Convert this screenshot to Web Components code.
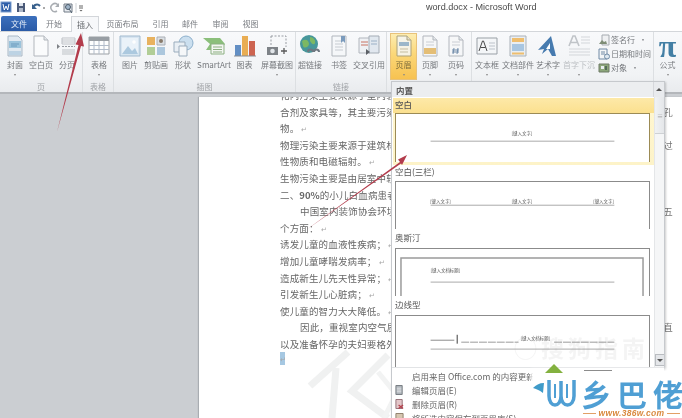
<!DOCTYPE html>
<html lang="zh">
<head>
<meta charset="utf-8">
<title>word.docx - Microsoft Word</title>
<style>
html,body{margin:0;padding:0;background:#fff;overflow:hidden}
body{font-family:"Noto Sans CJK SC","Liberation Sans",sans-serif}
</style>
</head>
<body>
<word-app>
  <word-titlebar slot="title"></word-titlebar>
  <word-tabs slot="tabs"></word-tabs>
  <word-ribbon slot="ribbon">
    <rb-group label="页" w="83" pl="2">
      <rb-btn label="封面" w="26" arrow><svg viewBox="0 0 22 22"><path d="M4 1h10l4 4v16H4z" fill="#dfe8f0" stroke="#9fb0c0"/><path d="M5 6h12v7H5z" fill="#8fbcd8"/><path d="M5 16h12v4H5z" fill="#b6cfe2"/><path d="M7 9h8M7 11h6" stroke="#5b8fb5"/></svg></rb-btn>
      <rb-btn label="空白页" w="26"><svg viewBox="0 0 22 22"><path d="M4 1h10l4 4v16H4z" fill="#fbfcfd" stroke="#a9aeb5"/><path d="M14 1v4h4" fill="#e3e6ea" stroke="#a9aeb5"/></svg></rb-btn>
      <rb-btn label="分页" w="26"><svg viewBox="0 0 22 22"><path d="M6 3h13v6H6z" fill="#fff" stroke="#b5b9bf"/><path d="M6 5h13M6 7h13M6 15h13M6 17h13M6 19h13" stroke="#b5b9bf"/><path d="M6 11.500h13" stroke="#8a8f96" stroke-dasharray="2 1"/><path d="M1 9l3 2.500-3 2.500z" fill="#6f7378"/></svg></rb-btn>
    </rb-group>
    <rb-group label="表格" w="31" pl="1">
      <rb-btn label="表格" w="30" arrow><svg viewBox="0 0 22 22"><path d="M1 2h20v17H1z" fill="#fff" stroke="#8f9499"/><path d="M1 2h20v4H1z" fill="#8c9299"/><path d="M1 10.500h20M1 14.500h20M6 6v13M11 6v13M16 6v13" stroke="#a8b4c4"/></svg></rb-btn>
    </rb-group>
    <rb-group label="插图" w="182" pl="1">
      <rb-btn label="图片" w="30"><svg viewBox="0 0 22 22"><path d="M1 1h20v20H1z" fill="#d3e3f0" stroke="#97b2c9"/><path d="M3 3h16v16H3z" fill="#e9f2f9"/><path d="M3 19l6-8 4 5 3-3 3 6z" fill="#a3c3dc"/><circle cx="15" cy="7" r="1.800" fill="#fff"/></svg></rb-btn>
      <rb-btn label="剪贴画" w="22"><svg viewBox="0 0 22 22"><path d="M2 2h8v8H2z" fill="#e7a94a"/><path d="M12 2h8v8h-8z" fill="#d8dde2" stroke="#a0a6ad"/><path d="M2 12h8v8H2z" fill="#a9c98a"/><path d="M12 12h8v8h-8z" fill="#a3c1da"/><circle cx="16" cy="6" r="2" fill="#7a6a58"/></svg></rb-btn>
      <rb-btn label="形状" w="32"><svg viewBox="0 0 22 22"><circle cx="14" cy="8" r="7" fill="#c6dcee" stroke="#7ea5c5"/><path d="M2 7h11v10H2z" fill="#e8eef4" stroke="#8ea3b5"/><path d="M7 11h8v10H7z" fill="#f6f8fa" stroke="#8ea3b5"/></svg></rb-btn>
      <rb-btn label="SmartArt" w="30"><svg viewBox="0 0 22 22"><path d="M0 3h17l5 6-5 6-3 0H3l4-6z" fill="#7db86a"/><path d="M8 9h13v10H8z" fill="#f3f6f2" stroke="#7fa772"/><path d="M10 12h9M10 14.500h9M10 17h9" stroke="#7fa772"/></svg></rb-btn>
      <rb-btn label="图表" w="31"><svg viewBox="0 0 22 22"><path d="M1 10h6v11H1z" fill="#4f81bd"/><path d="M8 1h6v20H8z" fill="#e8a33d"/><path d="M15 6h6v15h-6z" fill="#c8503a"/><path d="M0 21h22" stroke="#7a7f85"/></svg></rb-btn>
      <rb-btn label="屏幕截图" w="34" arrow><svg viewBox="0 0 22 22"><path d="M5 1h15v11" fill="none" stroke="#8a8f96" stroke-dasharray="2 1.500"/><path d="M5 1v9" stroke="#8a8f96" stroke-dasharray="2 1.500"/><path d="M1 12h11v8H1z" fill="#6d7378"/><circle cx="6.500" cy="16" r="2.300" fill="#dfe3e7"/><path d="M15 16h6M18 13v6" stroke="#444" stroke-width="1.300"/></svg></rb-btn>
    </rb-group>
    <rb-group label="链接" w="91" pl="1">
      <rb-btn label="超链接" w="26"><svg viewBox="0 0 22 22"><circle cx="10" cy="9" r="9" fill="#2f8a8e"/><path d="M3 6c4-3 7 0 7 3s-5 5-6 2zM11 2c3 0 6 3 5 6s-4 0-5-2z" fill="#6cb04f"/><path d="M9 17a2.500 2.500 0 015 0M15 17a2.500 2.500 0 015 0" fill="none" stroke="#5c6670" stroke-width="2"/></svg></rb-btn>
      <rb-btn label="书签" w="32"><svg viewBox="0 0 22 22"><path d="M4 1h14v20H4z" fill="#f6f8fa" stroke="#a8aeb5"/><path d="M7 6h8M7 9h8M7 12h8M7 15h8" stroke="#c0c6cc"/><path d="M13 1h4v7l-2-2-2 2z" fill="#6a8fb5"/></svg></rb-btn>
      <rb-btn label="交叉引用" w="28"><svg viewBox="0 0 22 22"><path d="M1 3h11v15H1z" fill="#eef1f4" stroke="#a8aeb5"/><path d="M3 7h7M3 10h7" stroke="#c2604f"/><path d="M11 1h10v17H11z" fill="#dfe6ee" stroke="#99a2ac"/><path d="M8 14l4 3-4 3z" fill="#474c52"/><path d="M13 6h6M13 9h6" stroke="#8ea7bf"/></svg></rb-btn>
    </rb-group>
    <rb-group label="页眉和页脚" w="85" pl="3">
      <rb-btn label="页眉" w="27" arrow active><svg viewBox="0 0 22 22"><path d="M4 1h10l4 4v16H4z" fill="#f6f6f2" stroke="#a29a78"/><path d="M14 1v4h4" fill="#e3e0d2" stroke="#a29a78"/><path d="M6 7h10v4H6z" fill="#8fb1d1"/><path d="M7 14h8M7 17h8" stroke="#bdb9a5"/></svg></rb-btn>
      <rb-btn label="页脚" w="26" arrow><svg viewBox="0 0 22 22"><path d="M4 1h10l4 4v16H4z" fill="#f6f7f8" stroke="#a9aeb5"/><path d="M14 1v4h4" fill="#e3e6ea" stroke="#a9aeb5"/><path d="M7 7h8M7 10h8" stroke="#c6cad0"/><path d="M5 13h12v6H5z" fill="#e2b765"/></svg></rb-btn>
      <rb-btn label="页码" w="26" arrow><svg viewBox="0 0 22 22"><path d="M4 1h10l4 4v16H4z" fill="#f6f7f8" stroke="#a9aeb5"/><path d="M14 1v4h4" fill="#e3e6ea" stroke="#a9aeb5"/><path d="M7 7h8M7 10h8" stroke="#c6cad0"/><path d="M9 13l-1 6M13 13l-1 6M7 15h7M7 17h7" stroke="#5e7ea0"/></svg></rb-btn>
    </rb-group>
    <rb-group label="文本" w="182" pl="1">
      <rb-btn label="文本框" w="28" arrow><svg viewBox="0 0 22 22"><path d="M1 3h20v16H1z" fill="#f4f6f8" stroke="#8d949b"/><path d="M3 16l3.500-10h1L11 16M4.500 12.500h5" fill="none" stroke="#333" stroke-width="1"/><path d="M13 8h6M13 11h6M13 14h6" stroke="#b5bcc4"/></svg></rb-btn>
      <rb-btn label="文档部件" w="34" arrow><svg viewBox="0 0 22 22"><path d="M3 1h16v20H3z" fill="#e8edf2" stroke="#a0a8b0"/><path d="M5 3h12v4H5z" fill="#eeb75c"/><path d="M5 9h12v7H5z" fill="#9ec0de"/><path d="M5 17.500h12v2H5z" fill="#eeb75c"/></svg></rb-btn>
      <rb-btn label="艺术字" w="26" arrow><svg viewBox="0 0 22 22"><path d="M14 1L1 15l6-1-2 5 6-5 4 7h4z" fill="#2f6aa5"/><path d="M13 8v6H9z" fill="#fff"/></svg></rb-btn>
      <rb-btn label="首字下沉" w="36" arrow dim><svg viewBox="0 0 22 22"><path d="M1 11L5 1h2l4 10M3 7.500h6" fill="none" stroke="#b9bdc2" stroke-width="1.600"/><path d="M13 2h9M13 5h9M13 8h9M1 14h21M1 17h21M1 20h21" stroke="#cfd2d6"/></svg></rb-btn>
      <rb-col>
        <rb-small label="签名行" arrow><svg viewBox="0 0 12 12"><path d="M4 1h7v10H4z" fill="#eef0f2" stroke="#9aa0a6"/><path d="M1 10l3-4 2 2 2-1 1 3z" fill="#6e7f64"/></svg></rb-small>
        <rb-small label="日期和时间"><svg viewBox="0 0 12 12"><path d="M1 1h8v10H1z" fill="#f3f5f7" stroke="#5f7d9b"/><path d="M3 4h4M3 6h4" stroke="#5f7d9b"/><circle cx="9" cy="8.500" r="2.500" fill="#dce7f0" stroke="#5f7d9b"/></svg></rb-small>
        <rb-small label="对象" arrow><svg viewBox="0 0 12 12"><path d="M1 2h10v8H1z" fill="#7e9c6a" stroke="#5c6b52"/><path d="M3 4h3v3H3z" fill="#e8edf0"/><path d="M7 4h2v4H7z" fill="#3f5a44"/></svg></rb-small>
      </rb-col>
    </rb-group>
    <rb-group label="" w="27" pl="0" last>
      <rb-btn label="公式" w="27" arrow><span class="pi" style="display:block;font:bold 32px/22px 'Liberation Serif',serif;color:#2b6f99;text-align:center">π</span></rb-btn>
    </rb-group>
  </word-ribbon>
  <word-workspace slot="work">
    <doc-page>
      <doc-line>化内污染主要来源于室内装</doc-line>
      <doc-line end="孔">合剂及家具等，其主要污染</doc-line>
      <doc-line>物。<i>↵</i></doc-line>
      <doc-line end="过">物理污染主要来源于建筑材</doc-line>
      <doc-line>性物质和电磁辐射。<i>↵</i></doc-line>
      <doc-line>生物污染主要是由居室中较</doc-line>
      <doc-line>二、<b>90%</b>的小儿白血病患者</doc-line>
      <doc-line indent end="五">中国室内装饰协会环境</doc-line>
      <doc-line>个方面：<i>↵</i></doc-line>
      <doc-line>诱发儿童的血液性疾病；<i>↵</i></doc-line>
      <doc-line>增加儿童哮喘发病率；<i>↵</i></doc-line>
      <doc-line>造成新生儿先天性异常；<i>↵</i></doc-line>
      <doc-line>引发新生儿心脏病；<i>↵</i></doc-line>
      <doc-line>使儿童的智力大大降低。<i>↵</i></doc-line>
      <doc-line indent end="直">因此，重视室内空气质</doc-line>
      <doc-line>以及准备怀孕的夫妇要格外</doc-line>
      <doc-line mark><i>↵</i></doc-line>
    </doc-page>
  </word-workspace>
  <page-watermark slot="over"></page-watermark>
  <header-menu slot="over">
    <menu-option label="空白" h="49" hot>
      <svg viewBox="0 0 255 49"><text x="127.500" y="21" class="t" text-anchor="middle">[键入文字]</text><path d="M35 27.500h186" stroke="#a9a9a9" stroke-width="1"/></svg>
    </menu-option>
    <menu-option label="空白(三栏)" h="48">
      <svg viewBox="0 0 255 48"><text x="45" y="21" class="t" text-anchor="middle">[键入文字]</text><text x="127.500" y="21" class="t" text-anchor="middle">[键入文字]</text><text x="210" y="21" class="t" text-anchor="middle">[键入文字]</text><path d="M35 23.500h186" stroke="#a9a9a9" stroke-width="1"/></svg>
    </menu-option>
    <menu-option label="奥斯汀" h="48" gap="19">
      <svg viewBox="0 0 255 48"><path d="M5 48V9h245v39" fill="none" stroke="#9a9a9a" stroke-width="1.500"/><text x="50" y="23" class="t" text-anchor="middle">[键入文档标题]</text><path d="M35 33.500h186" stroke="#a9a9a9" stroke-width="1"/></svg>
    </menu-option>
    <menu-option label="边线型" h="60" gap="19">
      <svg viewBox="0 0 255 60"><path d="M35 24.500h24" stroke="#8a8a8a"/><path d="M62 19v9" stroke="#7a7a7a" stroke-width="1.500"/><path d="M66 26.500h58M160 26.500h61" stroke="#9a9a9a" stroke-dasharray="8 1"/><text x="141" y="24" class="t" text-anchor="middle">[键入文档标题]</text><path d="M35 33.500h186" stroke="#a9a9a9"/></svg>
    </menu-option>
    <menu-row slot="foot" label="启用来自 Office.com 的内容更新("></menu-row>
    <menu-row slot="foot" label="编辑页眉(E)"><svg viewBox="0 0 10 10"><path d="M1 0h7v10H1z" fill="#aeb4ba" stroke="#70767c"/><path d="M2 3h5M2 5h5M2 7h5" stroke="#e6e8ea"/></svg></menu-row>
    <menu-row slot="foot" label="删除页眉(R)"><svg viewBox="0 0 10 10"><path d="M1 0h7v10H1z" fill="#e3c6c9" stroke="#8d6a70"/><path d="M4 6l5 4M9 6l-5 4" stroke="#b3404c" stroke-width="1.400"/></svg></menu-row>
    <menu-row slot="foot" label="将所选内容保存到页眉库(S)..."><svg viewBox="0 0 10 10"><path d="M1 0h8v10H1z" fill="#d6c6b0" stroke="#8a7a66"/></svg></menu-row>
  </header-menu>
  <guide-arrows slot="over"></guide-arrows>
  <brand-logo slot="over"></brand-logo>
</word-app>
<script>
function def(name, css, html, extra){
  class E extends HTMLElement{
    constructor(){super();const r=this.attachShadow({mode:'open'});r.innerHTML='<style>'+css+'</style>'+html;}
    connectedCallback(){
      const r=this.shadowRoot;
      r.querySelectorAll('[data-attr]').forEach(n=>{n.textContent=this.getAttribute(n.dataset.attr)||''});
      if(extra)extra.call(this,r);
    }
  }
  customElements.define(name,E);
}
def('word-app',`
:host{display:block;position:relative;width:682px;height:418px;overflow:hidden;background:#fff;color:#555;font-family:"Noto Sans CJK SC","Liberation Sans",sans-serif;filter:blur(.6px)}
.col{display:flex;flex-direction:column;height:100%}
`,`<div class="col"><slot name="title"></slot><slot name="tabs"></slot><slot name="ribbon"></slot><slot name="work"></slot></div><slot name="over"></slot>`);

def('word-titlebar',`
:host{display:flex;align-items:center;height:15px;flex:none;background:#fff}
.q{display:flex;align-items:center;width:426px;height:15px;flex:none}
svg{display:block;flex:none}
.t{font:9.100px/15px "Liberation Sans",sans-serif;color:#4a4a4a;white-space:nowrap}
`,`<div class="q">
<svg width="88" height="15" viewBox="0 0 88 15">
<rect x="1" y="2" width="10" height="10" fill="#2f5fa8" stroke="#7ea0cf"/><path d="M3 4l1.300 6 1.700-4 1.700 4L9 4" fill="none" stroke="#fff"/>
<path d="M17 3h8v9h-8z" fill="#4b5a78"/><path d="M19 3h4v3h-4z" fill="#dfe4ec"/><path d="M19 8h4v4h-4z" fill="#aeb8c8"/>
<path d="M33 8a4 4 0 017-2" fill="none" stroke="#38608c" stroke-width="2"/><path d="M32 4v5h5z" fill="#38608c"/><path d="M43 8h2" stroke="#555"/>
<path d="M58 5a4 4 0 10-1 6" fill="none" stroke="#a9adb2" stroke-width="1.500"/><path d="M59 3v4h-4z" fill="#a9adb2"/>
<path d="M64 4h8v8h-8z" fill="#e8ebef" stroke="#707a86"/><circle cx="68" cy="7" r="2.500" fill="#9fb4c8" stroke="#4a5a6a"/><path d="M69 9l3 4" stroke="#4a5a6a"/>
<path d="M76 3v10" stroke="#d0d3d7"/><path d="M79 6h4M79 8h4" stroke="#666"/><path d="M79.500 10h3l-1.500 1.500z" fill="#666"/>
</svg></div><span class="t">word.docx - Microsoft Word</span>`);

def('word-tabs',`
:host{display:flex;height:17px;flex:none;background:#fff;border-bottom:1px solid #d3d6da;box-sizing:border-box;font-size:8px;color:#7a7d82;align-items:flex-end}
span{display:flex;align-items:center;justify-content:center;height:15px;box-sizing:border-box;flex:none;position:relative}
.f{margin-left:1px;width:36px;background:linear-gradient(#3c70bd,#2a5aa6);color:#e4edf8;border-radius:2px 2px 0 0}
.a{height:16px;background:#f7f8fa;border:1px solid #d3d6da;border-bottom:0;top:1px;color:#66696d}
`,`<span class="f">文件</span><span style="width:34px">开始</span><span class="a" style="width:28px">插入</span><span style="width:47px">页面布局</span><span style="width:29px">引用</span><span style="width:30px">邮件</span><span style="width:31px">审阅</span><span style="width:29px">视图</span>`);

def('word-ribbon',`
:host{display:flex;height:62px;flex:none;box-sizing:border-box;background:linear-gradient(#f8f9fb,#f1f3f5 70%,#e9ebee);border-bottom:2px solid #b4b7bb}
`,`<slot></slot>`);

def('rb-group',`
:host{display:flex;flex-direction:column;flex:none;box-sizing:border-box;height:60px;border-right:1px solid #dcdfe2}
:host([last]){border-right:0}
.r{display:flex;height:48px;padding-top:1px;box-sizing:border-box}
.l{flex:1;text-align:center;font-size:8px;line-height:13px;color:#a0a3a7}
`,`<div class="r"><slot></slot></div><div class="l" data-attr="label"></div>`,function(r){
  this.style.width=this.getAttribute('w')+'px';
  r.querySelector('.r').style.paddingLeft=this.getAttribute('pl')+'px';
});

def('rb-btn',`
:host{display:flex;flex-direction:column;align-items:center;flex:none;box-sizing:border-box;height:47px;padding-top:2px;font-size:8px;color:#76797d}
:host([active]){background:linear-gradient(#fdeeb4,#fbd778 45%,#f7c14f);box-shadow:inset 0 0 0 1px #e8c27a;color:#7a6a3a}
:host([dim]){color:#bcbfc3}
.i{width:22px;height:22px;flex:none;opacity:.88}
::slotted(svg){display:block;width:22px;height:22px}
.l{line-height:11px;margin-top:1.500px;white-space:nowrap}
.a{width:0;height:0;border:1.500px solid transparent;border-top:2px solid #888;border-bottom:0;margin-top:4px;display:none}
:host([arrow]) .a{display:block}
`,`<div class="i"><slot></slot></div><div class="l" data-attr="label"></div><div class="a"></div>`,function(){
  this.style.width=this.getAttribute('w')+'px';
});

def('rb-col',`:host{display:flex;flex-direction:column;gap:1px;padding:0 0 0 1px;width:56px;flex:none;box-sizing:border-box}`,`<slot></slot>`);
def('rb-small',`
:host{display:flex;align-items:center;height:13px;font-size:8px;color:#76797d;white-space:nowrap;gap:1px}
.i{width:12px;height:12px;flex:none;opacity:.88}
::slotted(svg){display:block;width:12px;height:12px}
.a{display:none;margin-left:3px;font-size:8px}
:host([arrow]) .a{display:inline}
`,`<div class="i"><slot></slot></div><span data-attr="label"></span><span class="a">·</span>`);

def('word-workspace',`
:host{display:flex;flex:1;min-height:0;background:#cbced2;padding:3px 0 0 199px;overflow:hidden}
`,`<slot></slot>`);

def('doc-page',`
:host{display:block;flex:1;background:#fff;padding:0 9px 0 81px;overflow:hidden;box-shadow:-1px 0 1px #a9adb2;box-sizing:border-box;font-size:9.500px;color:#666}
.w{margin-top:-10px}
`,`<div class="w"><slot></slot></div>`);

def('doc-line',`
:host{display:flex;justify-content:space-between;height:16.600px;line-height:16.600px;white-space:nowrap;letter-spacing:.15px}
:host([indent]) .m{padding-left:20px}
:host([mark]) .m{background:#a6c8e2;width:5px;overflow:hidden;line-height:13px;height:13px;margin-top:-1px}
::slotted(i){font-style:normal;color:#a5a5a5;font-size:7px;margin-left:2px}
:host([mark]) ::slotted(i){margin-left:0}
::slotted(b){font-weight:700;letter-spacing:0}
.e{color:#777}
`,`<span class="m"><slot></slot></span><span class="e" data-attr="end"></span>`);

def('page-watermark',`
:host{display:block;position:absolute;left:0;top:0;width:682px;height:418px;pointer-events:none}
svg{display:block}
`,`<svg width="682" height="418" viewBox="0 0 682 418"><g stroke="#f0f1f1" stroke-width="7" fill="none"><path d="M348 352l-38 34"/><path d="M336 368l-4 50"/><path d="M388 355l-36 36 36 27"/></g><g stroke="#f2f3f3" stroke-width="5" fill="none"><path d="M378 372l18 22-12 24"/></g></svg>`);

def('header-menu',`
:host{display:flex;flex-direction:column;position:absolute;left:391px;top:81px;width:274px;height:337px;background:#fff;box-sizing:border-box;border:1px solid #c6c9cd;border-bottom:0;box-shadow:1px 1px 2px rgba(0,0,0,.2);font-size:8.500px;color:#5a5a5a}
.h{height:15px;flex:none;background:#eceef0;display:flex;align-items:center;justify-content:space-between;font-weight:700;padding-left:4px;color:#5a5a5a;box-sizing:border-box}
.up{width:10px;height:15px;display:flex;align-items:center;justify-content:center;background:#e9ebee;border-left:1px solid #d6d8dc}
.up:after,.dn:after{content:"";border:3px solid transparent}
.up:after{border-bottom:3px solid #555;border-top:0}
.dn:after{border-top:3px solid #555;border-bottom:0}
.b{display:flex;height:270px;flex:none;overflow:hidden}
.g{width:262px;flex:none;padding-left:1px;box-sizing:border-box;overflow:hidden}
.s{width:10px;flex:none;background:#f5f6f7;border-left:1px solid #e4e6e8;display:flex;flex-direction:column;justify-content:space-between}
.th{height:36px;background:linear-gradient(90deg,#f0f2f4,#e3e5e8);border-bottom:1px solid #ced1d4;display:flex;align-items:center;justify-content:center;font-size:6px;color:#999}
.dn{height:10px;display:flex;align-items:center;justify-content:center;background:#e4e6e9;border:1px solid #b9bcc0;margin-bottom:1px}
.f{flex:1;border-top:1px solid #e2e4e6;padding-top:1px}
`,`<div class="h"><span>内置</span><span class="up"></span></div>
<div class="b"><div class="g"><slot></slot></div><div class="s"><div class="th">≡</div><div class="dn"></div></div></div>
<div class="f"><slot name="foot"></slot></div>`);

def('menu-option',`
:host{display:block;font-size:8.500px;color:#555}
.l{display:flex;align-items:center;box-sizing:border-box;padding:0 0 4px 2px;white-space:nowrap}
.t{margin-left:2px;width:255px;box-sizing:border-box;border:1.500px solid #8b8b8b;border-bottom:0;background:#fff;overflow:hidden}
::slotted(svg){display:block;width:252px}
:host([hot]){background:linear-gradient(#fde9a8 0,#fbe08f 15px,#fff6cf 15px,#fdf3c8 100%);padding-bottom:3px;margin-top:1px}
:host([hot]) .t{border-color:#9c8b55}
:host([hot]) .l{font-weight:500}
`,`<div class="l" data-attr="label"></div><div class="t"><slot></slot></div>`,function(r){
  const l=r.querySelector('.l'),t=r.querySelector('.t');
  t.style.height=this.getAttribute('h')+'px';
  l.style.height=(this.getAttribute('gap')||(this.hasAttribute('hot')?15:16))+'px';
  const s=this.querySelector('svg');
  if(s){const st=document.createElementNS('http://www.w3.org/2000/svg','style');st.textContent='.t{font:4.500px "Noto Sans CJK SC",sans-serif;fill:#555}';s.prepend(st);}
});

def('menu-row',`
:host{display:flex;align-items:center;height:14px;white-space:nowrap;font-size:8.500px;color:#666}
.i{width:20px;padding-left:3px;box-sizing:border-box;flex:none;height:10px}
::slotted(svg){display:block;width:9px;height:10px}
`,`<div class="i"><slot></slot></div><span data-attr="label"></span>`);

def('guide-arrows',`
:host{display:block;position:absolute;left:0;top:0;width:682px;height:418px;pointer-events:none}
svg{display:block}
`,`<svg width="682" height="418" viewBox="0 0 682 418"><path d="M57 132L78.500 45 75.500 44.500 81 33 84 46.500 81 46z" fill="#b33c4c"/><path d="M306 230L400 162 398 159.500 407 155 402 165 401 163.500z" fill="#b33c4c"/></svg>`);

def('brand-logo',`
:host{display:block;position:absolute;left:500px;top:338px;width:182px;height:80px;pointer-events:none}
.wm{position:absolute;left:14px;top:-4px;font-size:23px;line-height:26px;color:rgba(150,150,150,.1);white-space:nowrap;letter-spacing:4px;font-weight:700}
.bg{position:absolute;left:33px;top:33px;right:0;bottom:0;background:#fff;box-shadow:0 0 3px 2px #fff}
.ln{position:absolute;left:84px;top:32px;width:28px;height:1px;background:#8c8c8c}
.tri{position:absolute;left:45px;top:26px;width:0;height:0;border:9px solid transparent;border-bottom:9px solid #83b13f;border-top:0}
svg{position:absolute;left:28px;top:40px}
.n{position:absolute;left:81px;top:36px;font:700 30px/38px "Noto Sans CJK SC",sans-serif;letter-spacing:6px;color:#4f9fd4;white-space:nowrap}
.u{position:absolute;left:83px;right:2px;top:70px;height:10px;display:flex;align-items:center;gap:3px;font:italic 700 8.500px/10px "Liberation Sans",sans-serif;color:#d98a3f;letter-spacing:.3px;white-space:nowrap}
.u:before,.u:after{content:"";flex:1;height:1px;background:#e2a066}
`,`<div class="wm">◯搜狗指南</div><div class="bg"></div><div class="ln"></div><div class="tri"></div>
<svg width="52" height="34" viewBox="0 0 52 34"><path d="M5 10C8 7 11 5 16 5L15 15C11 12 8 11 5 10z" fill="#3f9bc9"/><path d="M21 2V18C21 30 33 30 33 18V3M33 18C33 30 46 30 46 18V2" fill="none" stroke="#4f9fd4" stroke-width="3.500"/><path d="M27 6V20M39 6V20" stroke="#4f9fd4" stroke-width="2"/></svg>
<div class="n">乡巴佬</div><div class="u">www.386w.com</div>`);
</script>
</body>
</html>
